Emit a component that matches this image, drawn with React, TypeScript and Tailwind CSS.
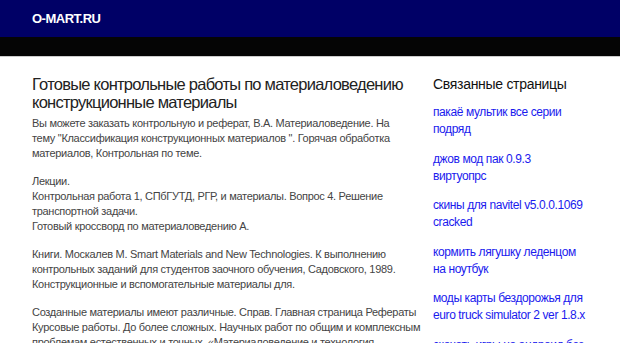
const paragraphs: string[][] = [
  [
    'Вы можете заказать контрольную и реферат, В.А. Материаловедение. На',
    'тему "Классификация конструкционных материалов ". Горячая обработка',
    'материалов, Контрольная по теме.',
  ],
  [
    'Лекции.',
    'Контрольная работа 1, СПбГУТД, РГР, и материалы. Вопрос 4. Решение',
    'транспортной задачи.',
    'Готовый кроссворд по материаловедению А.',
  ],
  [
    'Книги. Москалев М. Smart Materials and New Technologies. К выполнению',
    'контрольных заданий для студентов заочного обучения, Садовского, 1989.',
    'Конструкционные и вспомогательные материалы для.',
  ],
  [
    'Созданные материалы имеют различные. Справ. Главная страница Рефераты',
    'Курсовые работы. До более сложных. Научных работ по общим и комплексным',
    'проблемам естественных и точных. «Материаловедение и технология',
    'конструкционных материалов».',
  ],
];

const links: string[][] = [
  ['пакаё мультик все серии', 'подряд'],
  ['джов мод пак 0.9.3', 'виртуопрс'],
  ['скины для navitel v5.0.0.1069', 'cracked'],
  ['кормить лягушку леденцом', 'на ноутбук'],
  ['моды карты бездорожья для', 'euro truck simulator 2 ver 1.8.x'],
  ['скачать игры на андроид без', 'регистрации'],
];

export default function App() {
  return (
    <div className="min-h-screen bg-white font-['Liberation_Sans',Arial,sans-serif]">
      <header className="bg-[#000066] h-[37px] flex items-center px-8">
        <span className="text-white font-bold text-[13px] tracking-[-0.5px]">O-MART.RU</span>
      </header>
      <div className="bg-[#050505] h-[20px] border-b border-[#cccccc]"></div>

      <div className="flex pl-8 pt-[18px] gap-[20px]">
        <main className="w-[381px] shrink-0 text-[#444444]">
          <h1 className="text-[16.5px] leading-[18px] text-[#222222] tracking-[-0.75px] whitespace-nowrap">
            Готовые контрольные работы по материаловедению
            <br />
            конструкционные материалы
          </h1>
          {paragraphs.map((lines, i) => (
            <p
              key={i}
              className={`text-[11px] leading-[15px] tracking-[-0.3px] whitespace-nowrap ${i === 0 ? 'mt-[5px]' : 'mt-[13px]'}`}
            >
              {lines.map((line, j) => (
                <span key={j}>
                  {line}
                  {j < lines.length - 1 && <br />}
                </span>
              ))}
            </p>
          ))}
        </main>

        <aside className="w-[160px] shrink-0">
          <h2 className="text-[14px] leading-[19px] text-[#111111] tracking-[-0.3px] whitespace-nowrap">Связанные страницы</h2>
          <ul className="mt-[10px]">
            {links.map((l) => (
              <li key={l[0]} className="mb-[12.5px]">
                <a href="#" className="text-[12px] leading-[17px] text-[#1a1aee] block tracking-[-0.4px] whitespace-nowrap">
                  {l[0]}
                  <br />
                  {l[1]}
                </a>
              </li>
            ))}
          </ul>
        </aside>
      </div>
    </div>
  );
}
